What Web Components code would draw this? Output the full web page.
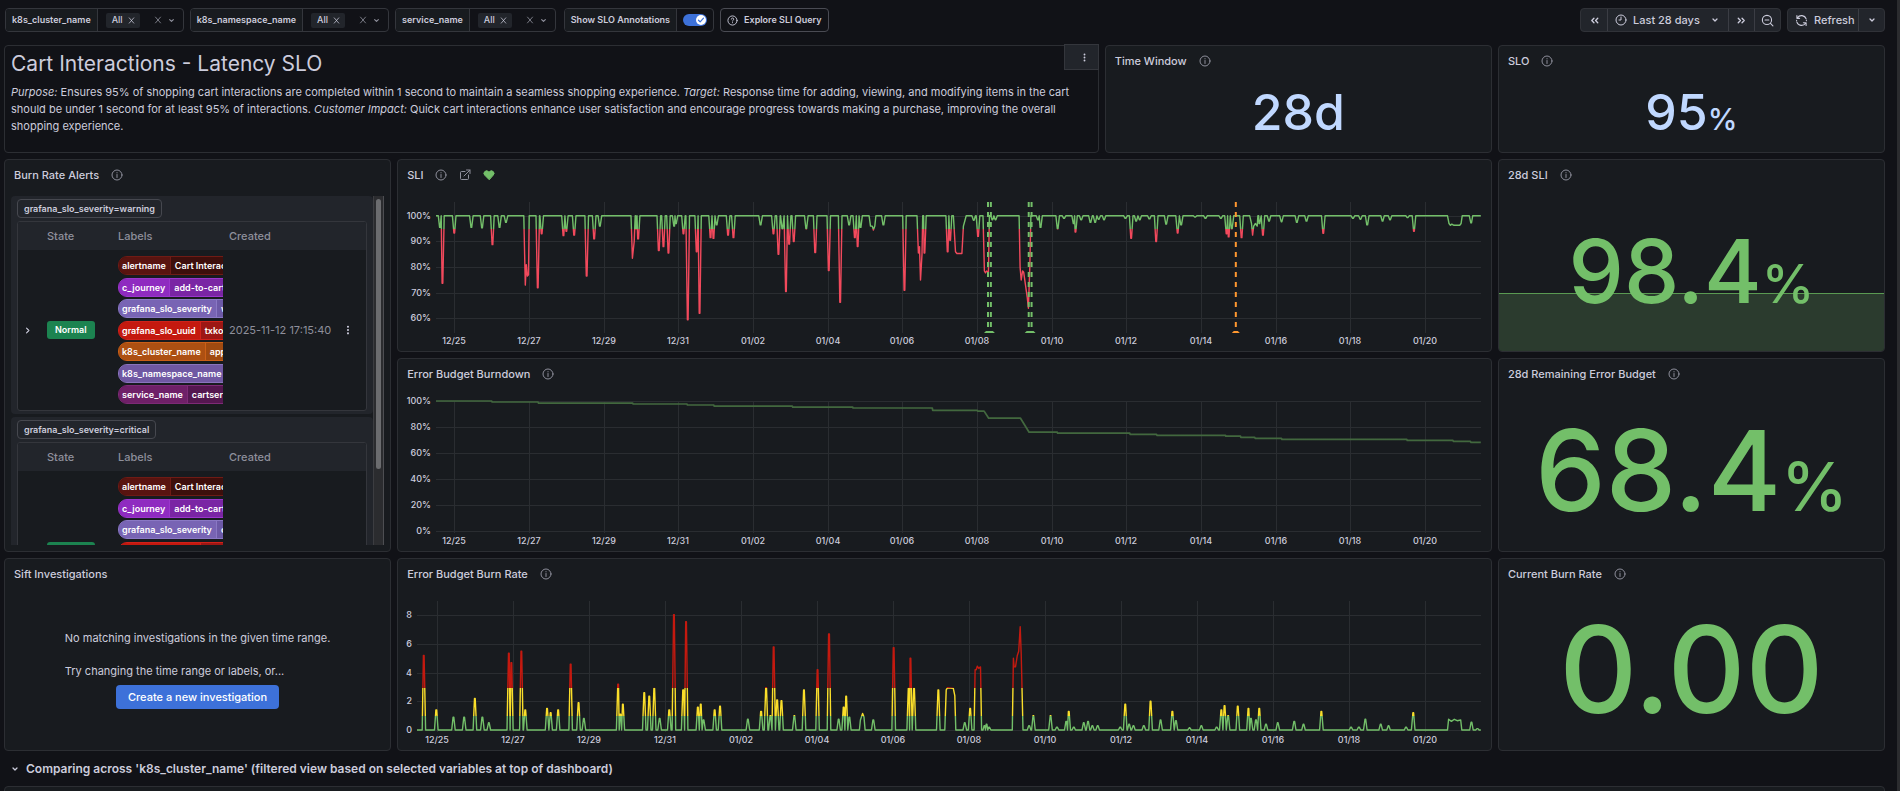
<!DOCTYPE html>
<html lang="en">
<head>
<meta charset="utf-8">
<title>Cart Interactions - Latency SLO</title>
<style>
  html { background: #111217; }
  body {
    margin: 0;
    overflow: hidden;
    color: #ccccdc;
    font: 400 11px/16px Inter, sans-serif;
    --canvas: #111217;
    --panel: #181b1f;
    --raised: #22252b;
    --line: #2c2e33;
    --muted: #8e8f9b;
    --green: #73bf69;
    --blue: #c0d8ff;
  }
</style>
</head>
<body>
<dash-page>
  <dash-toolbar slot="toolbar">
    <dash-variable label="k8s_cluster_name"></dash-variable>
    <dash-variable label="k8s_namespace_name"></dash-variable>
    <dash-variable label="service_name"></dash-variable>
    <dash-switch label="Show SLO Annotations"></dash-switch>
    <dash-link href="#explore">Explore SLI Query</dash-link>
    <dash-timepicker slot="end">Last 28 days</dash-timepicker>
  </dash-toolbar>

  <dash-text class="wide">
    <span slot="title">Cart Interactions - Latency SLO</span>
    <i>Purpose:</i> Ensures 95% of shopping cart interactions are completed within 1 second to maintain a seamless shopping experience. <i>Target:</i> Response time for adding, viewing, and modifying items in the cart should be under 1 second for at least 95% of interactions. <i>Customer Impact:</i> Quick cart interactions enhance user satisfaction and encourage progress towards making a purchase, improving the overall shopping experience.
  </dash-text>
  <dash-panel heading="Time Window" info><dash-stat size="s" value="28d"></dash-stat></dash-panel>
  <dash-panel heading="SLO" info><dash-stat size="s" value="95" unit="%"></dash-stat></dash-panel>

  <dash-panel heading="Burn Rate Alerts" info class="tall"><dash-alerts></dash-alerts></dash-panel>
  <dash-panel heading="SLI" info link heart class="wide"><dash-chart kind="sli"></dash-chart></dash-panel>
  <dash-panel heading="28d SLI" info><dash-stat size="m" value="98.4" unit="%" spark></dash-stat></dash-panel>

  <dash-panel heading="Error Budget Burndown" info class="wide"><dash-chart kind="burndown"></dash-chart></dash-panel>
  <dash-panel heading="28d Remaining Error Budget" info><dash-stat size="l" value="68.4" unit="%"></dash-stat></dash-panel>

  <dash-panel heading="Sift Investigations"><dash-sift></dash-sift></dash-panel>
  <dash-panel heading="Error Budget Burn Rate" info class="wide"><dash-chart kind="burnrate"></dash-chart></dash-panel>
  <dash-panel heading="Current Burn Rate" info><dash-stat size="xl" value="0.00"></dash-stat></dash-panel>

  <dash-row slot="row">Comparing across 'k8s_cluster_name' (filtered view based on selected variables at top of dashboard)</dash-row>
</dash-page>

<script>
const svg = (body, size = 12, extra = '') =>
  `<svg width="${size}" height="${size}" viewBox="0 0 24 24" fill="none" stroke="currentColor" stroke-width="2" stroke-linecap="round" stroke-linejoin="round" aria-hidden="true" ${extra}>${body}</svg>`;
const ICON = {
  x: '<path d="M6 5l12 14M18 5L6 19"/>',
  down: '<path d="M8 10l4 4 4-4" stroke-width="2.500"/>',
  right: '<path d="M10 7l5 5-5 5" stroke-width="2.500"/>',
  info: '<circle cx="12" cy="12" r="10"/><path d="M12 11v6M12 7.2v.6"/>',
  help: '<circle cx="12" cy="12" r="10"/><path d="M9.5 9a2.6 2.6 0 1 1 3.6 2.6c-.8.4-1.1.8-1.1 1.6M12 16.6v.4"/>',
  link: '<path d="M12 5H5a2 2 0 0 0-2 2v12a2 2 0 0 0 2 2h12a2 2 0 0 0 2-2v-7M15 2h7v7M22 2L10 14"/>',
  heart: '<path fill="currentColor" d="M12 21L3.5 12.4a5 5 0 0 1 0-7.2 5.300 5.300 0 0 1 7.500 0l1 1 1-1a5.300 5.300 0 0 1 7.500 0 5 5 0 0 1 0 7.200z"/>',
  prev: '<path d="M11 8l-4 4 4 4M18 8l-4 4 4 4" stroke-width="2.500"/>',
  next: '<path d="M6 8l4 4-4 4M13 8l4 4-4 4" stroke-width="2.500"/>',
  clock: '<circle cx="12" cy="12" r="10"/><path d="M12 6v6H8"/>',
  zoomOut: '<circle cx="11" cy="11" r="8.500"/><path d="M17.500 17.500L22 22M7.500 11h7"/>',
  sync: '<path d="M20.500 9A9 9 0 0 0 4.500 7M3.500 3v5h5M3.500 15a9 9 0 0 0 16 2M20.500 21v-5h-5M3 11.500v1M21 11.500v1"/>',
  dots: '<g fill="currentColor" stroke="none"><circle cx="12" cy="4" r="2.500"/><circle cx="12" cy="12" r="2.500"/><circle cx="12" cy="20" r="2.500"/></g>',
  check: '<path d="M6 12.500l4 4 8-9" stroke-width="3"/>'
};
const BASE = `
  *, *::before, *::after { box-sizing: border-box; }
  svg { display: block; flex: none; }
  button, input { font: inherit; color: inherit; background: none; border: 0; padding: 0; margin: 0; }
  button { display: flex; align-items: center; cursor: pointer; white-space: nowrap; }
`;
class Base extends HTMLElement {
  constructor() {
    super();
    this.attachShadow({ mode: 'open' });
  }
  paint(css, html) {
    this.shadowRoot.innerHTML = `<style>${BASE}${css}</style>${html}`;
  }
}

customElements.define('dash-page', class extends Base {
  connectedCallback() {
    this.paint(`
      :host { display: block; min-height: 100vh; padding: 8px 12px 0 4px; border-right: 3px solid #2b2c2f; box-sizing: border-box; }
      main {
        display: grid; grid-template-columns: repeat(24, minmax(0, 1fr));
        grid-template-rows: 108px 193px 194px 193px; gap: 6px; margin-top: 13px;
      }
      ::slotted(*) { grid-column: span 5; min-width: 0; }
      ::slotted(.wide) { grid-column: span 14; }
      ::slotted(.tall) { grid-row: span 2; }
      .next { height: 40px; border: 1px solid var(--line); border-radius: 4px; background: var(--panel); }
    `, `<slot name="toolbar"></slot><main><slot></slot></main><slot name="row"></slot><section class="next" aria-hidden="true"></section>`);
  }
});

customElements.define('dash-toolbar', class extends Base {
  connectedCallback() {
    this.paint(`
      :host { display: flex; gap: 6px; height: 24px; padding-left: 1px; }
      .end { margin-left: auto; }
    `, `<slot></slot><div class="end"><slot name="end"></slot></div>`);
  }
});

customElements.define('dash-variable', class extends Base {
  connectedCallback() {
    const label = this.getAttribute('label');
    this.paint(`
      :host { display: flex; border: 1px solid #34363c; border-radius: 4px; font-weight: 500; font-size: 9px; overflow: hidden; }
      label { display: flex; align-items: center; padding: 0 6px; background: var(--panel); border-right: 1px solid #34363c; font-weight: 600; }
      .box { display: flex; align-items: center; padding: 0 6px 0 8px; }
      .tag { display: flex; align-items: center; gap: 4px; height: 15px; padding: 0 4px 0 6px; border-radius: 2px; background: var(--raised); }
      input { width: 13px; outline: none; }
      .tools { display: flex; gap: 3px; color: var(--muted); }
    `, `<label for="q">${label}</label>
      <div class="box">
        <span class="tag">All<button type="button" aria-label="Remove All">${svg(ICON.x, 9)}</button></span>
        <input id="q" type="text" autocomplete="off">
        <span class="tools"><button type="button" aria-label="Clear">${svg(ICON.x, 10)}</button>
        <button type="button" aria-label="Open">${svg(ICON.down, 11)}</button></span>
      </div>`);
  }
});

customElements.define('dash-switch', class extends Base {
  connectedCallback() {
    this.paint(`
      :host { display: flex; margin-left: 2px; border: 1px solid #34363c; border-radius: 4px; font-weight: 600; font-size: 9px; overflow: hidden; }
      label { display: flex; align-items: center; padding: 0 6px; background: var(--panel); border-right: 1px solid #34363c; }
      .box { display: grid; align-items: center; padding: 0 6px; }
      input { grid-area: 1 / 1; appearance: none; width: 24px; height: 12px; border-radius: 6px; background: #3d71d9; }
      .knob { grid-area: 1 / 1; justify-self: end; width: 10px; height: 10px; margin-right: 1px; border-radius: 5px; background: #fff; color: #3d71d9; pointer-events: none; }
    `, `<label for="s">${this.getAttribute('label')}</label>
      <div class="box"><input id="s" type="checkbox" role="switch" checked><span class="knob">${svg(ICON.check, 10)}</span></div>`);
  }
});

customElements.define('dash-link', class extends Base {
  connectedCallback() {
    this.paint(`
      :host { display: flex; }
      a { display: flex; align-items: center; gap: 6px; padding: 0 6px; border: 1px solid #4a4b53; border-radius: 4px; color: inherit; text-decoration: none; font-weight: 600; font-size: 9px; }
    `, `<a href="${this.getAttribute('href')}">${svg(ICON.help, 11)}<slot></slot></a>`);
  }
});

customElements.define('dash-timepicker', class extends Base {
  connectedCallback() {
    this.paint(`
      :host { display: flex; gap: 6px; font-weight: 500; }
      .group { display: flex; height: 24px; border: 1px solid #303238; border-radius: 4px; background: var(--raised); overflow: hidden; }
      button + button { border-left: 1px solid #3b3d44; }
      .icon { width: 26px; justify-content: center; }
      .range { width: 121px; gap: 6px; padding: 0 7px; }
      .range svg:last-child { margin-left: auto; }
      .refresh { width: 70px; gap: 6px; padding-left: 7px; }
    `, `<div class="group">
        <button type="button" class="icon" aria-label="Move back">${svg(ICON.prev, 13)}</button>
        <button type="button" class="range">${svg(ICON.clock, 12)}<slot></slot>${svg(ICON.down, 12)}</button>
        <button type="button" class="icon" aria-label="Move forward">${svg(ICON.next, 13)}</button>
        <button type="button" class="icon" aria-label="Zoom out">${svg(ICON.zoomOut, 13)}</button>
      </div>
      <div class="group">
        <button type="button" class="refresh">${svg(ICON.sync, 13)}Refresh</button>
        <button type="button" class="icon" aria-label="Refresh interval">${svg(ICON.down, 12)}</button>
      </div>`);
  }
});

customElements.define('dash-text', class extends Base {
  connectedCallback() {
    this.paint(`
      :host { display: block; position: relative; padding: 6px; border: 1px solid var(--line); border-radius: 4px; }
      h1 { margin: 0 0 8px; font-size: 21px; line-height: 24px; font-weight: 400; }
      p { margin: 0; line-height: 17px; }
      button { position: absolute; top: -2px; right: -1px; width: 35px; height: 26px; padding-left: 6px; justify-content: center; background: var(--raised); border: 1px solid #34363c; }
    `, `<h1><slot name="title"></slot></h1><p><slot></slot></p><button type="button" aria-label="Menu">${svg(ICON.dots, 9)}</button>`);
  }
});

customElements.define('dash-panel', class extends Base {
  connectedCallback() {
    const has = (n) => this.hasAttribute(n);
    this.paint(`
      :host { display: flex; flex-direction: column; border: 1px solid var(--line); border-radius: 4px; background: var(--panel); overflow: hidden; }
      header { display: flex; align-items: center; gap: 12px; height: 29px; padding: 0 9px; color: var(--muted); flex: none; margin-bottom: 1px; }
      h2 { margin: 0; font-size: 11px; line-height: 16px; font-weight: 500; color: #ccccdc; }
      .heart { color: var(--green); }
      ::slotted(*) { flex: 1; min-height: 0; }
    `, `<header><h2>${this.getAttribute('heading')}</h2>
      ${has('info') ? svg(ICON.info, 12) : ''}
      ${has('link') ? svg(ICON.link, 12) : ''}
      ${has('heart') ? svg(ICON.heart, 12, 'class="heart"') : ''}
      </header><slot></slot>`);
  }
});

customElements.define('dash-stat', class extends Base {
  connectedCallback() {
    const spark = this.hasAttribute('spark');
    this.paint(`
      :host { display: grid; --value: 50px; --unit: 30px; color: var(--green); box-sizing: border-box; }
      :host([size="s"]) { color: var(--blue); padding-bottom: 4px; }
      :host([size="m"]) { --value: 88px; --unit: 53px; }
      :host([size="l"]) { --value: 112px; --unit: 67px; }
      :host([size="xl"]) { --value: 121px; }
      .value { grid-area: 1 / 1; z-index: 1; align-self: center; text-align: center; font-size: var(--value); line-height: 1; font-weight: 500; }
      .unit { font-size: var(--unit); }
      .spark { grid-area: 1 / 1; align-self: end; height: 58px; background: #2b3b2e; border-top: 1px solid #5a9a52; }
    `, `${spark ? '<div class="spark"></div>' : ''}
      <div class="value">${this.getAttribute('value')}<span class="unit">${this.getAttribute('unit') || ''}</span></div>`);
  }
});

customElements.define('dash-sift', class extends Base {
  connectedCallback() {
    this.paint(`
      :host { display: flex; justify-content: center; align-items: center; }
      .block { display: flex; flex-direction: column; }
      p { margin: 0 0 17px; }
      p + p { margin: 0 0 6px; }
      button { align-self: center; height: 24px; padding: 0 12px; border-radius: 4px; background: #3d71d9; color: #fff; font-weight: 500; }
    `, `<div class="block"><p>No matching investigations in the given time range.</p>
      <p>Try changing the time range or labels, or...</p>
      <button type="button">Create a new investigation</button></div>`);
  }
});

customElements.define('dash-row', class extends Base {
  connectedCallback() {
    this.paint(`
      :host { display: block; height: 35px; }
      button { gap: 5px; height: 35px; padding-left: 5px; font-size: 12px; font-weight: 600; }
    `, `<button type="button" aria-expanded="true">${svg(ICON.down, 12)}<slot></slot></button>`);
  }
});

customElements.define('dash-alerts', class extends Base {
  connectedCallback() {
    const labels = (sev) => [
      ['alertname', 'Cart Interactions - Latency SLO', '#591410', '#3d0f0c', '#6f1b15'],
      ['c_journey', 'add-to-cart', '#8f2bc0', '#7a25a4', '#9b36cc'],
      ['grafana_slo_severity', sev, '#7864b4', '#6c59a6', '#8a78c4'],
      ['grafana_slo_uuid', 'txko7', '#c4190f', '#9d1714', '#d0211a'],
      ['k8s_cluster_name', 'appenv', '#ad5012', '#a04a10', '#cb5f17'],
      ['k8s_namespace_name', 'production', '#7058a3', '#644e94', '#8a74bd'],
      ['service_name', 'cartservice', '#6f2068', '#541750', '#7d2a76']
    ];
    const group = (sev) => `
      <section class="group">
        <span class="match">grafana_slo_severity=${sev}</span>
        <div class="frame"><table>
          <colgroup><col class="c1"><col class="c2"><col class="c3"><col class="c4"><col></colgroup>
          <thead><tr><th></th><th>State</th><th>Labels</th><th>Created</th><th></th></tr></thead>
          <tbody><tr>
            <td class="expand"><button type="button" aria-label="Expand">${svg(ICON.right, 11)}</button></td>
            <td><span class="state">Normal</span></td>
            <td><div class="labels">${labels(sev).map(([k, v, a, b, c]) =>
              `<span class="pill" style="--a:${a};--b:${b};--c:${c}"><span class="k">${k}</span><span class="v">${v}</span></span>`).join('')}</div></td>
            <td class="when">2025-11-12 17:15:40</td>
            <td class="more"><button type="button" aria-label="More">${svg(ICON.dots, 10)}</button></td>
          </tr></tbody>
        </table></div>
      </section>`;
    this.paint(`
      :host { display: flex; margin: 6px; overflow: hidden; }
      .list { flex: 1; min-width: 0; display: flex; flex-direction: column; gap: 3px; overflow: hidden; }
      .group { flex: none; padding: 3px 6px; border-radius: 4px; background: var(--raised); }
      .match { display: inline-block; height: 19px; line-height: 17px; padding: 0 6px; border: 1px solid #46484f; border-radius: 4px; font-size: 9px; font-weight: 600; vertical-align: top; }
      .frame { margin-top: 3px; border: 1px solid #34363c; border-radius: 3px; overflow: hidden; background: var(--panel); }
      table { width: 100%; border-collapse: collapse; table-layout: fixed; }
      .c1 { width: 23px; } .c2 { width: 71px; } .c3 { width: 111px; } .c4 { width: 114px; }
      th { height: 28px; padding: 0 0 0 6px; background: var(--raised); color: var(--muted); text-align: left; font-weight: 500; }
      td { height: 160px; padding: 0 0 0 6px; white-space: nowrap; }
      td.expand { padding-left: 4px; }
      .labels { display: flex; flex-direction: column; justify-content: space-between; align-items: flex-start; height: 148px; overflow: hidden; }
      .pill { display: flex; height: 19px; line-height: 17px; color: #fff; font-size: 9px; font-weight: 600; border: 1px solid var(--c); border-radius: 9px; background: var(--b); overflow: hidden; flex: none; }
      .k { padding: 0 4px 0 3px; background: var(--a); border-right: 1px solid var(--c); }
      .v { padding: 0 6px 0 4px; }
      .state { display: inline-block; height: 18px; line-height: 18px; padding: 0 8px; border-radius: 3px; background: #1c8350; color: #fff; font-size: 9px; font-weight: 600; }
      .when { color: var(--muted); }
      .bar { flex: none; width: 11px; padding: 3px 2px; background: #2b2c2f; border-left: 1px solid #3c3d41; border-right: 1px solid #4d4e52; }
      .thumb { height: 270px; border-radius: 3px; background: #6b6c6f; }
    `, `<div class="list">${group('warning')}${group('critical')}</div><div class="bar"><div class="thumb"></div></div>`);
  }
});

const DAYS = ['12/25', '12/27', '12/29', '12/31', '01/02', '01/04', '01/06', '01/08', '01/10', '01/12', '01/14', '01/16', '01/18', '01/20'];

/* A spike is [sample, value]; a plateau is an array of such points. */
const CHARTS = {
  sli: {
    left: 38, samples: 2926, firstTick: 51, tickStep: 209.15, range: [105.4, 55.1], rest: 100,
    grid: [100, 90, 80, 70, 60], format: (v) => v + '%',
    stops: [['#73bf69', 95], ['#f2495c', -Infinity]],
    marks: [[1546, '#73bf69'], [1554, '#73bf69'], [1660, '#73bf69'], [1668, '#73bf69'], [2240, '#ff9830']],
    data: [[11,95.5],[18,73.7],[51,93.3],[99,95.5],[129,95.3],[158,88.8],[178,95.5],[196,97.5],
      [[246,100],[250,73],[253,81],[256,76.5],[259,77],[261,100]],[285,72],[296,93],[357,92.3],[365,94],[387,92.5],[422,76.5],[443,91],[459,96],
      [[546,100],[550,83.500],[555,90],[558,100]],[560,95],[566,91],[624,86.5],[637,88],[651,85.5],[667,96],[672,97],[693,93],[705,59.5],[730,86],[738,62],
      [769,91.5],[777,91.2],[786,96.5],[818,92.5],[833,91.5],[909,96.5],[945,93],[959,85],[970,95],[980,70.5],[989,89],[1002,90],
      [1037,95],[1062,85.7],[1100,78.7],[1132,66.3],[1157,96.5],[1173,91.5],[1181,88],[1189,95.5],
      [[1213,100],[1217,96],[1222,96],[1225,94.5],[1229,96],[1232,100]],[1253,96.5],[1312,71],
      [[1347,100],[1351,85.5],[1354,88],[1357,75],[1361,85],[1363,100]],[1368,85.5],[1433,86],[1440,90.5],
      [[1449,100],[1455,86],[1459,85.3],[1473,85.3],[1477,96],[1481,98],[1485,100]],[1506,98.3],[1518,92],
      [[1532,100],[1536,78.5],[1539,77.8],[1542,78.5],[1547,78],[1550,100]],[1558,98.5],[1567,98.5],
      [[1633,100],[1636,80],[1639,75],[1643,78.5],[1646,78],[1651,73],[1656,68],[1659,64],[1663,80],[1666,100]],
      [1686,98.5],[1693,95.5],[1741,95],[1759,99],[1786,97],[1791,93.7],[1807,98.5],[1833,97.5],[1846,97.5],[1856,98.7],[1871,98.5],
      [1931,99],[1947,91.3],[1961,98],[1971,98.5],[1998,98.8],[2017,90],[2045,96.8],[2077,93.3],[2087,96.5],[2126,99.5],[2155,99],[2198,99],
      [2214,93],[2220,91.8],[2229,95],[2256,91.5],[[2279,100],[2284,97],[2287,92.5],[2290,96],[2295,97],[2300,96],[2302,100]],[2306,97],[2316,92.5],[2333,98],[2368,97.7],[2411,97.5],
      [2438,98],[2485,93.2],[2568,99],[2589,98.7],[2608,96.5],[2651,98],[2672,98.5],[2721,99.3],[2739,94],
      [[2833,100],[2837,97],[2841,96.3],[2845,96.8],[2851,96.3],[2867,96.3],[2871,97],[2874,100]],[2899,97.3]]
  },
  burndown: {
    left: 38, samples: 2926, firstTick: 51, tickStep: 209.15, range: [100, 0], rest: null,
    grid: [100, 80, 60, 40, 20, 0], format: (v) => v + '%',
    stops: [['#42683e', -Infinity]], marks: [],
    data: [[[0,100],[156,100],[157,99.2],[286,99.2],[287,98.4],[551,98.4],[552,97.7],[703,97.7],[704,96.9],[778,96.9],[779,96.1],[998,96.1],
      [999,95.3],[1167,95.3],[1168,94.6],[1390,94.6],[1391,92.8],[1516,92.8],[1517,92.2],[1535,92.2],[1548,86.8],[1637,86.8],[1661,76],[1740,76],
      [1741,75.2],[1943,75.2],[1944,74.4],[2018,74.4],[2019,73.6],[2211,73.6],[2212,72.9],[2253,72.9],[2254,72.1],[2293,72.1],[2294,71.3],
      [2368,71.3],[2369,70.5],[2719,70.5],[2720,69.8],[2848,69.8],[2849,69],[2897,69],[2898,68.2],[2926,68.2]]]
  },
  burnrate: {
    left: 19, samples: 2977, firstTick: 55, tickStep: 212.700, range: [9, 0], rest: 0,
    grid: [8, 6, 4, 2, 0], format: String,
    stops: [['#c4190f', 2.95], ['#fade2a', 1], ['#73bf69', -Infinity]], marks: [],
    data: [[19,5.2],[54,1.4],[102,.9],[132,.9],[162,2.2],[183,.9],[201,.5],[257,5.35],[264,4.7],[292,5.5],[303,1.4],[364,1.5],[374,1.2],[395,1.4],
      [430,4.6],[452,1.9],[467,.8],[563,3.2],[569,1.1],[576,1.8],[636,2.6],[650,2.35],[664,2.9],[679,.8],[706,1.4],[719,8.05],[745,2.8],[753,7.55],
      [786,1.6],[794,1.8],[802,.7],[833,1.4],[848,1.65],[926,.75],[963,1.3],[977,2.95],[989,1],[998,5.8],[1008,2.1],[1020,2.05],[1056,1],[1083,2.8],
      [1121,4.2],[1153,6.7],[1180,.75],[1194,1.6],[1201,2.35],[1210,.9],[[1238,0],[1241,.7],[1247,1.15],[1251,.9],[1254,0]],[1277,.7],[1334,5.75],
      [1376,2.9],[1381,5],[1391,2.9],[1459,2.8],[[1477,0],[1481,2.8],[1485,2.95],[1501,2.9],[1505,2.4],[1508,0]],[1533,.5],[1548,1.5],
      [[1559,0],[1562,4.2],[1565,4.2],[1568,4.45],[1572,4.3],[1577,4.4],[1580,0]],[1588,.3],[1594,.4],[1601,.2],
      [[1666,0],[1669,5],[1671,4.4],[1675,4.4],[1680,5.2],[1684,5.5],[1688,7.2],[1691,5.3],[1696,0]],
      [1713,.3],[1725,1],[1773,1],[1791,.2],[1817,.6],[1824,1.3],[1838,.2],[1866,.5],[1878,.6],[1890,.3],[1905,.3],[1968,.2],[1982,1.8],[1993,.4],
      [2005,.3],[2034,.3],[2053,2],[2081,.7],[2114,1.3],[2124,.65],[2162,.15],[2195,.3],[2238,.2],[2251,1.4],[2260,1.7],[2270,1],[2297,1.65],
      [2327,1.5],[2334,.8],[2348,.7],[2357,1.5],[2376,.4],[2409,.5],[2455,.6],[2481,.4],[2531,1.3],[2614,.2],[2636,.2],[2654,.75],[2697,.4],
      [2719,.3],[2768,.2],[2788,1.2],[[2884,0],[2887,.75],[2895,.6],[2903,.75],[2911,.65],[2921,.7],[2924,0]],[2951,.55],[2968,.1]]
  }
};

customElements.define('dash-chart', class extends Base {
  connectedCallback() {
    this.paint(`
      :host { display: block; overflow: hidden; }
      svg { width: 100%; height: 100%; }
      text { fill: #ccccdc; font-size: 9px; font-weight: 500; }
      .grid { stroke: #2a2d31; stroke-width: 1; shape-rendering: crispEdges; }
    `, '<svg role="img"></svg>');
    this.svg = this.shadowRoot.querySelector('svg');
    this.watch = new ResizeObserver(() => this.draw());
    this.watch.observe(this);
    this.draw();
  }
  disconnectedCallback() { this.watch.disconnect(); }
  points(c) {
    const out = [];
    const edge = (d, last) => Array.isArray(d[0]) ? d[last ? d.length - 1 : 0][0] : d[0];
    c.data.forEach((d, i) => {
      if (Array.isArray(d[0])) { out.push(...d); return; }
      const before = i ? d[0] - edge(c.data[i - 1], true) : 9;
      const after = i < c.data.length - 1 ? edge(c.data[i + 1], false) - d[0] : 9;
      out.push([d[0] - Math.min(5, before / 2), c.rest], [d[0] - 1, d[1]], [d[0] + 1, d[1]], [d[0] + Math.min(5, after / 2), c.rest]);
    });
    return c.rest === null ? out : [[0, c.rest], ...out, [c.samples, c.rest]];
  }
  draw() {
    const c = CHARTS[this.getAttribute('kind')];
    const { width, height } = this.getBoundingClientRect();
    if (!width) return;
    const top = 12, bottom = height - 20, right = width - 10;
    const X = (s) => c.left + (right - c.left) * s / c.samples;
    const Y = (v) => top + (bottom - top) * (c.range[0] - v) / (c.range[0] - c.range[1]);
    let out = '';
    for (const v of c.grid) {
      const y = Math.round(Y(v));
      out += `<path class="grid" d="M${c.left} ${y}H${right}"/><text x="${c.left - 5}" y="${y + 3}" text-anchor="end">${c.format(v)}</text>`;
    }
    DAYS.forEach((d, i) => {
      const x = Math.round(X(c.firstTick + c.tickStep * i));
      out += `<path class="grid" d="M${x} ${top}V${bottom + 2}"/><text x="${x}" y="${height - 7}" text-anchor="middle">${d}</text>`;
    });
    let upper = 0, stops = '';
    for (const [color, floor] of c.stops) {
      const lower = floor === -Infinity ? 1 : Y(floor) / height;
      stops += `<stop offset="${upper}" stop-color="${color}"/><stop offset="${lower}" stop-color="${color}"/>`;
      upper = lower;
    }
    const line = this.points(c).map(([s, v]) => X(s).toFixed(1) + ',' + Y(v).toFixed(1)).join(' ');
    out += `<linearGradient id="g" gradientUnits="userSpaceOnUse" x1="0" y1="0" x2="0" y2="${height}">${stops}</linearGradient>
      <polyline points="${line}" fill="none" stroke="url(#g)" stroke-width="${c.rest === null ? 1.7 : 1.4}" stroke-linejoin="round"/>`;
    for (const [s, color] of c.marks) {
      const x = X(s);
      out += `<path d="M${x} ${top}V${bottom + 2}" stroke="${color}" stroke-width="2" stroke-dasharray="5 5"/>
        <path d="M${x - 4} ${bottom + 2}h8l-2-2h-4z" fill="${color}"/>`;
    }
    this.svg.innerHTML = out;
  }
});
</script>
</body>
</html>
